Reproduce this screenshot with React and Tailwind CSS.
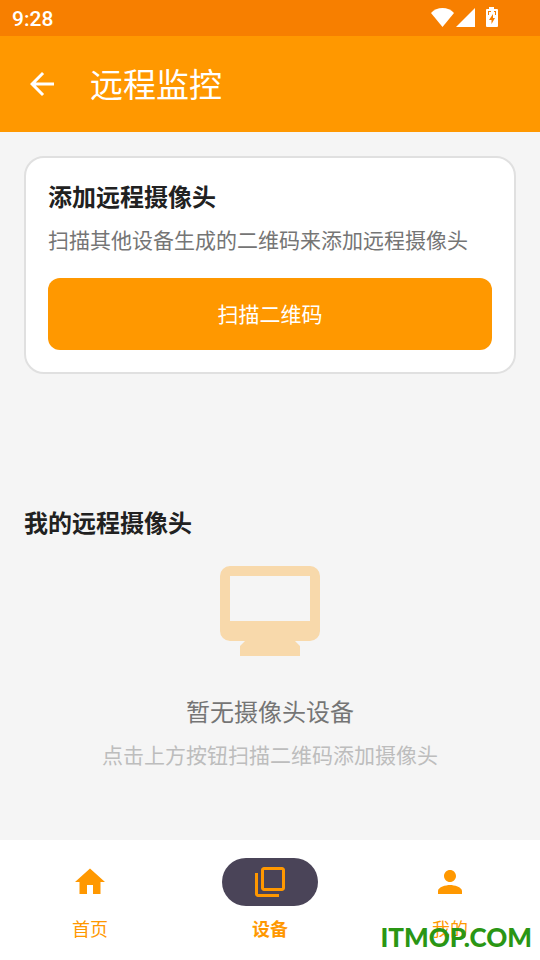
import React from "react";

function StatusBar() {
  return (
    <div className="flex h-9 items-center justify-between bg-[#f77f00] pl-3 pr-10 text-white">
      <time className="pt-0.5 font-[Roboto,sans-serif] text-[21px] leading-6 font-medium">9:28</time>
      <svg className="h-6 w-[72px]" viewBox="0 0 72 24" fill="currentColor" aria-hidden="true">
        <path d="M14.500 21L3 7C6 3.800 10 2 14.500 2S23 3.800 26 7z" />
        <path d="M28 21L47 2v19z" />
        <path
          fillRule="evenodd"
          d="M61 1h5v2h3q1 0 1 1v16q0 1-1 1H59q-1 0-1-1V4q0-1 1-1h2zM60 5v4h1V6h2V5zM66 5v1h1v3h1V5zM65 8l-4 6h2.500v4l3.500-6h-2z"
        />
      </svg>
    </div>
  );
}

function TopBar() {
  return (
    <header className="flex h-24 items-center bg-[#ff9800] px-6 text-white">
      <button type="button" aria-label="返回" className="mr-[30px]">
        <svg className="size-9" viewBox="0 0 24 24" fill="currentColor">
          <path d="M20 11H7.830l5.590-5.590L12 4l-8 8 8 8 1.410-1.410L7.830 13H20v-2z" />
        </svg>
      </button>
      <h1 className="pb-0.5 text-[33px] leading-[48px]">远程监控</h1>
    </header>
  );
}

function AddCameraCard() {
  return (
    <section className="rounded-[20px] border-2 border-[#e0e0e0] bg-white p-[22px]">
      <h2 className="text-2xl leading-8 font-bold text-[#212121]">添加远程摄像头</h2>
      <p className="mt-3 text-[21px] leading-[30px] text-[#757575]">扫描其他设备生成的二维码来添加远程摄像头</p>
      <button
        type="button"
        className="mt-6 h-[72px] w-full rounded-xl bg-[#ff9800] pb-0.5 text-[21px] leading-[30px] text-white"
      >
        扫描二维码
      </button>
    </section>
  );
}

function EmptyState() {
  return (
    <div className="mt-7 flex flex-col items-center text-center">
      <svg className="h-[90px] w-[100px]" viewBox="0 0 20 18" fill="#f8d9ab" aria-hidden="true">
        <path
          fillRule="evenodd"
          d="M2 0h16a2 2 0 0 1 2 2v11a2 2 0 0 1-2 2h-3l1 1v2H4v-2l1-1H2a2 2 0 0 1-2-2V2a2 2 0 0 1 2-2zM2 2v9h16V2z"
        />
      </svg>
      <p className="mt-[39px] text-2xl leading-8 text-[#757575]">暂无摄像头设备</p>
      <p className="mt-3 text-[21px] leading-[30px] text-[#bdbdbd]">点击上方按钮扫描二维码添加摄像头</p>
    </div>
  );
}

const tabs = [
  { label: "首页", icon: "M10 20v-6h4v6h5v-8h3L12 3 2 12h3v8z" },
  {
    label: "设备",
    active: true,
    icon: "M4 6H2v14c0 1.100.900 2 2 2h14v-2H4V6zm16-4H8c-1.100 0-2 .900-2 2v12c0 1.100.900 2 2 2h12c1.100 0 2-.900 2-2V4c0-1.100-.900-2-2-2zm0 14H8V4h12v12z",
  },
  {
    label: "我的",
    icon: "M12 12c2.210 0 4-1.790 4-4s-1.790-4-4-4-4 1.790-4 4 1.790 4 4 4zm0 2c-2.670 0-8 1.340-8 4v2h16v-2c0-2.660-5.330-4-8-4z",
  },
];

function BottomNav() {
  return (
    <nav className="grid h-[120px] grid-cols-3 bg-white pt-[18px] text-[#ff9800]">
      {tabs.map((tab) => (
        <button
          key={tab.label}
          type="button"
          aria-current={tab.active ? "page" : undefined}
          className="flex flex-col items-center"
        >
          <span
            className={`flex h-12 w-24 items-center justify-center rounded-full ${tab.active ? "bg-[#4a4458]" : ""}`}
          >
            <svg className="size-9" viewBox="0 0 24 24" fill="currentColor" aria-hidden="true">
              <path d={tab.icon} />
            </svg>
          </span>
          <span className={`mt-2 text-lg leading-7 ${tab.active ? "font-bold" : ""}`}>{tab.label}</span>
        </button>
      ))}
    </nav>
  );
}

export default function App() {
  return (
    <div
      lang="zh-CN"
      className="relative flex min-h-screen flex-col bg-[#f5f5f5] font-['Noto_Sans_CJK_SC',sans-serif]"
    >
      <StatusBar />
      <TopBar />
      <main className="flex-1 p-6">
        <AddCameraCard />
        <section className="mt-[132px]">
          <h2 className="text-2xl leading-8 font-bold text-[#212121]">我的远程摄像头</h2>
          <EmptyState />
        </section>
      </main>
      <BottomNav />
      <span className="pointer-events-none absolute right-2 bottom-1.5 font-[Lato,sans-serif] text-[26px] leading-[34px] font-black text-[#2a9614]">
        ITMOP.COM
      </span>
    </div>
  );
}
